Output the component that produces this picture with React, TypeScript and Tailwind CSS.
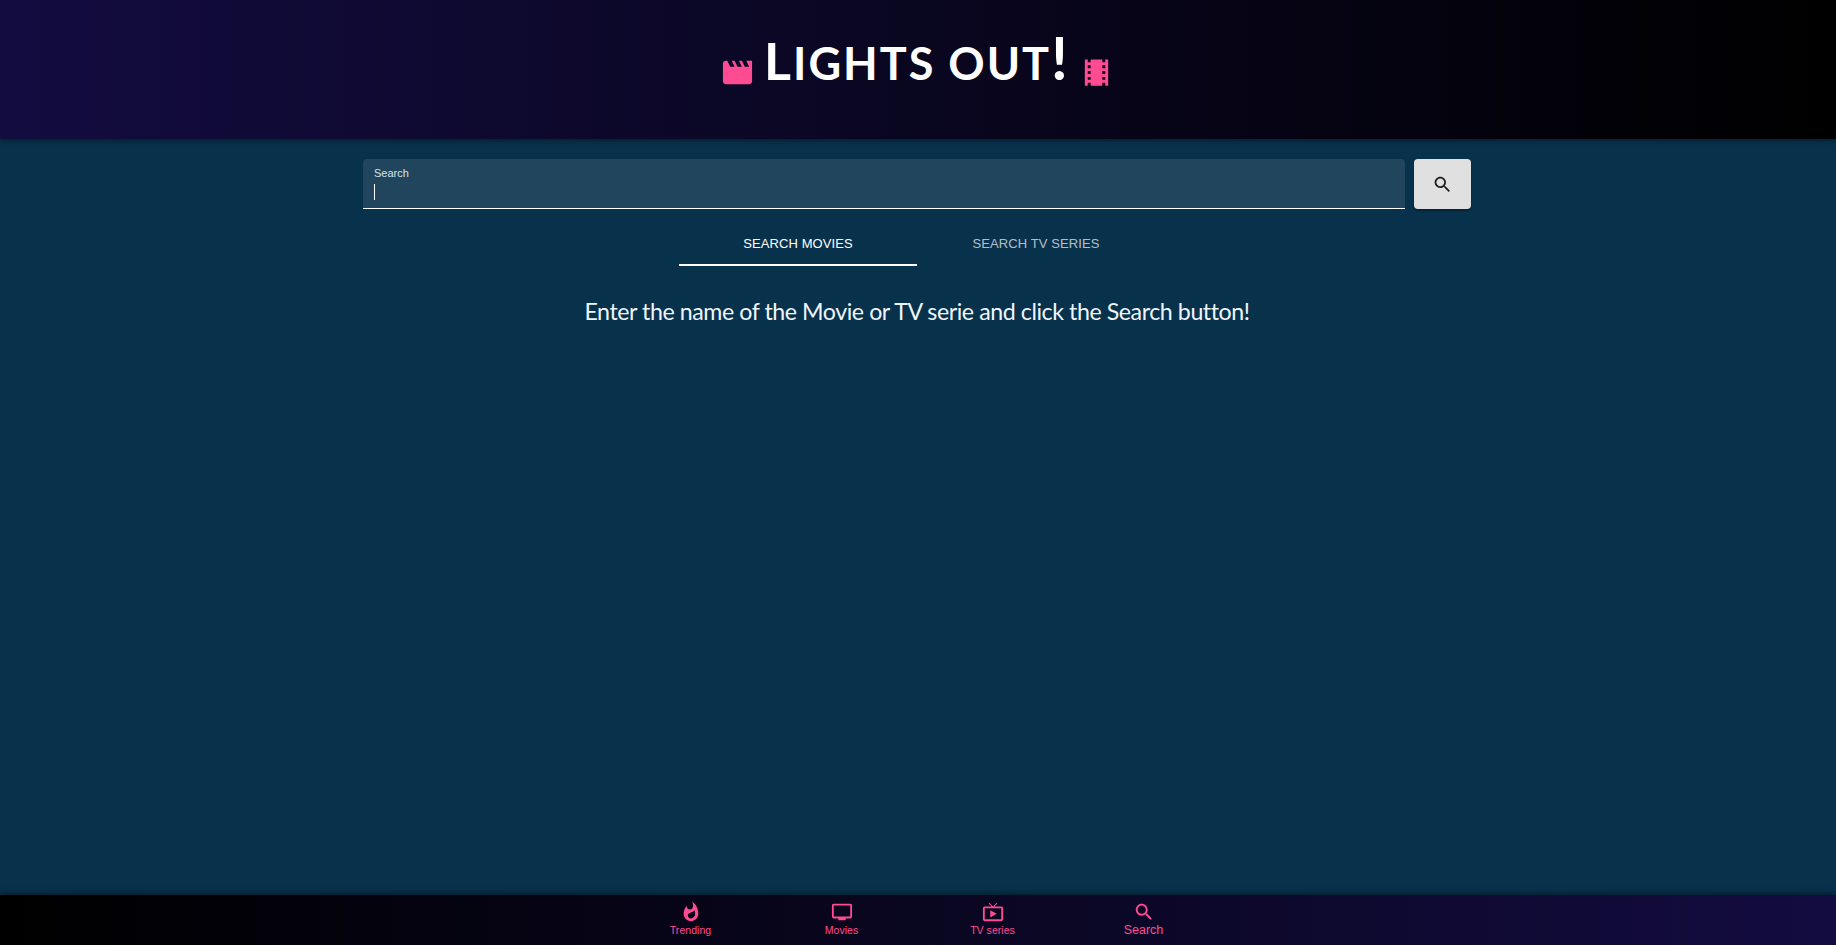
import { useState } from "react";

const ICONS = {
  movie: "M18 4l2 4h-3l-2-4h-2l2 4h-3l-2-4H8l2 4H7L5 4H4c-1.1 0-1.99.9-1.99 2L2 18c0 1.1.9 2 2 2h16c1.1 0 2-.9 2-2V4h-4z",
  film: "M18 3v2h-2V3H8v2H6V3H4v18h2v-2h2v2h8v-2h2v2h2V3h-2zM8 17H6v-2h2v2zm0-4H6v-2h2v2zm0-4H6V7h2v2zm10 8h-2v-2h2v2zm0-4h-2v-2h2v2zm0-4h-2V7h2v2z",
  whatshot: "M13.5.67s.74 2.65.74 4.8c0 2.06-1.35 3.73-3.41 3.73-2.07 0-3.63-1.67-3.63-3.73l.03-.36C5.21 7.51 4 10.62 4 14c0 4.42 3.58 8 8 8s8-3.58 8-8C20 8.61 17.41 3.8 13.5.67zM11.71 19c-1.78 0-3.22-1.4-3.22-3.14 0-1.62 1.05-2.76 2.81-3.12 1.77-.36 3.6-1.21 4.62-2.58.39 1.29.59 2.65.59 4.04 0 2.65-2.15 4.8-4.8 4.8z",
  tv: "M21 3H3c-1.1 0-2 .9-2 2v12c0 1.1.9 2 2 2h5v2h8v-2h5c1.1 0 1.99-.9 1.99-2L23 5c0-1.1-.9-2-2-2zm0 14H3V5h18v12z",
  liveTv: "M21 6h-7.59l3.29-3.29L16 2l-4 4-4-4-.71.71L10.59 6H3c-1.1 0-2 .89-2 2v12c0 1.1.9 2 2 2h18c1.1 0 2-.9 2-2V8c0-1.11-.9-2-2-2zm0 14H3V8h18v12zM9 10v8l7-4z",
  search: "M15.5 14h-.79l-.28-.27C15.41 12.59 16 11.11 16 9.5 16 5.91 13.09 3 9.5 3S3 5.91 3 9.5 5.91 16 9.5 16c1.61 0 3.09-.59 4.23-1.57l.27.28v.79l5 4.99L20.49 19l-4.99-5zm-6 0C7.01 14 5 11.99 5 9.5S7.01 5 9.5 5 14 7.01 14 9.5 11.99 14 9.5 14z",
};

function Icon({ name, className }: { name: keyof typeof ICONS; className: string }) {
  return (
    <svg viewBox="0 0 24 24" fill="currentColor" className={className}>
      <path d={ICONS[name]} />
    </svg>
  );
}

const NAV = [
  { label: "Trending", icon: "whatshot" },
  { label: "Movies", icon: "tv" },
  { label: "TV series", icon: "liveTv" },
  { label: "Search", icon: "search" },
] as const;

export default function App() {
  const [tab] = useState(0);

  return (
    <div className="flex h-[945px] flex-col overflow-hidden bg-[#08314c] font-['Liberation_Sans',sans-serif]">
      {/* Header */}
      <header className="relative z-10 flex h-[139px] shrink-0 items-center justify-center bg-linear-to-r/srgb from-[#130c40] to-black pr-[2px] shadow-[0_1px_5px_rgba(0,0,0,0.5)]">
        <Icon name="movie" className="mt-[5px] h-[35px] w-[35px] text-[#ff4b91]" />
        <h1 className="mx-[9px] mb-[19px] flex items-baseline font-['Lato',sans-serif] text-[45px] leading-[90px] font-bold tracking-[2px] whitespace-pre text-white">
          <span className="text-[52px]">L</span>
          IGHTS OUT
          <span className="text-[60px] leading-[90px]">!</span>
        </h1>
        <Icon name="film" className="mt-[5px] h-[35px] w-[35px] text-[#ff4b91]" />
      </header>

      {/* Search */}
      <main className="flex-1">
        <div className="mx-auto w-[1110px] pt-[20px] pr-[2px]">
          <div className="flex gap-[9px]">
            <div className="relative h-[50px] flex-1 rounded-t border-b border-white bg-[#21455d] px-[11px] pt-[8px]">
              <label className="block text-[11px] leading-[12px] text-[#d7e2e9]">Search</label>
              <span className="mt-[5px] block h-[16px] w-px bg-white" />
            </div>
            <button className="flex h-[50px] w-[57px] items-center justify-center rounded bg-[#e0e0e0] text-[#1f1f1f] shadow-[0_2px_2px_rgba(0,0,0,0.3)]">
              <Icon name="search" className="h-[21px] w-[21px]" />
            </button>
          </div>
        </div>

        <div className="mx-auto mt-[9px] flex w-[478px] pr-[2px]">
          {["Search Movies", "Search TV Series"].map((t, i) => (
            <div
              key={t}
              className={
                i === tab
                  ? "flex h-[48px] w-[238px] items-center justify-center border-b-2 border-white pt-[5px] text-[13px] tracking-[0.1px] text-white uppercase"
                  : "flex h-[48px] w-[238px] items-center justify-center border-b-2 border-transparent pt-[5px] text-[13px] tracking-[0.1px] text-white/70 uppercase"
              }
            >
              {t}
            </div>
          ))}
        </div>

        <p className="mt-[30px] pr-[2px] text-center font-['Lato',sans-serif] text-[23.2px] leading-[30px] tracking-[-0.44px] text-[#eef6fb]">
          Enter the name of the Movie or TV serie and click the Search button!
        </p>
      </main>

      {/* Bottom nav */}
      <nav className="relative z-10 flex h-[50px] shrink-0 justify-center bg-linear-to-r/srgb from-black to-[#130c40] pr-[2px] shadow-[0_-1px_6px_rgba(0,0,0,0.5)]">
        {NAV.map((n) => (
          <div key={n.label} className="flex w-[151px] flex-col items-center pt-[6px] text-[#ff4b91]">
            <Icon name={n.icon} className="h-[22px] w-[22px]" />
            <span className={n.label === "Search" ? "text-[12.5px] leading-[14px]" : "text-[10.6px] leading-[14px]"}>
              {n.label}
            </span>
          </div>
        ))}
      </nav>
    </div>
  );
}
